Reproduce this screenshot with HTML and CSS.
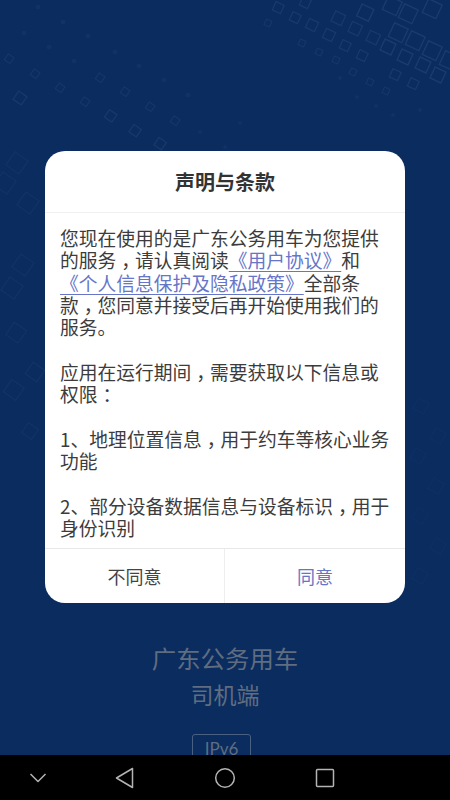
FILE: index.html
```html
<!DOCTYPE html>
<html lang="zh-CN">
<head>
<meta charset="utf-8">
<title>声明与条款</title>
<link rel="stylesheet" href="styles.css">
</head>
<body>
<div class="screen">
  <main class="splash">
    <svg class="pattern" viewBox="0 0 450 755" width="450" height="755" aria-hidden="true">
      <g class="sq big">
        <rect x="385" y="-2" width="15" height="15" transform="rotate(25 392 5)"/>
        <rect x="401" y="6" width="15" height="15" transform="rotate(25 408 13)"/>
        <rect x="425" y="1" width="15" height="15" transform="rotate(25 432 8)"/>
        <rect x="391" y="25" width="15" height="15" transform="rotate(25 398 32)"/>
        <rect x="408" y="33" width="15" height="15" transform="rotate(25 415 40)"/>
        <rect x="425" y="43" width="15" height="15" transform="rotate(25 432 50)"/>
        <rect x="442" y="53" width="15" height="15" transform="rotate(25 449 60)"/>
        <rect x="359" y="6" width="13" height="13" transform="rotate(25 365 12)"/>
        <rect x="382" y="41" width="12" height="12" transform="rotate(25 388 47)"/>
        <rect x="399" y="51" width="12" height="12" transform="rotate(25 405 57)"/>
        <rect x="417" y="59" width="12" height="12" transform="rotate(25 423 65)"/>
        <rect x="432" y="69" width="12" height="12" transform="rotate(25 438 75)"/>
      </g>
      <g class="sq left">
        <rect x="9" y="155" width="16" height="16" transform="rotate(35 17 163)"/>
        <rect x="20" y="195" width="16" height="16" transform="rotate(35 28 203)"/>
        <rect x="-3" y="175" width="16" height="16" transform="rotate(35 5 183)"/>
        <rect x="15" y="257" width="16" height="16" transform="rotate(35 23 265)"/>
        <rect x="4" y="280" width="16" height="16" transform="rotate(35 12 288)"/>
        <rect x="9" y="325" width="15" height="15" transform="rotate(35 16 332)"/>
        <rect x="6" y="382" width="15" height="15" transform="rotate(35 13 390)"/>
        <rect x="28" y="365" width="14" height="14" transform="rotate(35 35 372)"/>
        <rect x="24" y="425" width="12" height="12" transform="rotate(35 30 431)"/>
      </g>
      <g class="sq mid">
        <rect x="333" y="13" width="11" height="11" transform="rotate(25 339 18)"/>
        <rect x="350" y="23" width="11" height="11" transform="rotate(25 355 28)"/>
        <rect x="368" y="32" width="11" height="11" transform="rotate(25 373 37)"/>
        <rect x="307" y="20" width="10" height="10" transform="rotate(25 312 25)"/>
        <rect x="324" y="30" width="10" height="10" transform="rotate(25 329 35)"/>
        <rect x="341" y="41" width="9" height="9" transform="rotate(25 345 45)"/>
        <rect x="358" y="51" width="9" height="9" transform="rotate(25 362 55)"/>
        <rect x="291" y="13" width="9" height="9" transform="rotate(25 295 17)"/>
        <rect x="274" y="3" width="9" height="9" transform="rotate(25 278 7)"/>
        <rect x="301" y="-2" width="9" height="9" transform="rotate(25 305 2)"/>
        <rect x="391" y="70" width="9" height="9" transform="rotate(25 395 74)"/>
        <rect x="409" y="79" width="9" height="9" transform="rotate(25 413 83)"/>
        <rect x="15" y="93" width="10" height="10" transform="rotate(35 20 98)"/>
        <rect x="106" y="111" width="9" height="9" transform="rotate(35 110 116)"/>
        <rect x="131" y="126" width="9" height="9" transform="rotate(35 135 130)"/>
        <rect x="156" y="139" width="9" height="9" transform="rotate(35 160 143)"/>
      </g>
      <g class="sq small">
        <rect x="6" y="55" width="7" height="7" transform="rotate(35 9 58)"/>
        <rect x="32" y="70" width="7" height="7" transform="rotate(35 35 73)"/>
        <rect x="57" y="84" width="7" height="7" transform="rotate(35 60 87)"/>
        <rect x="82" y="98" width="7" height="7" transform="rotate(35 85 101)"/>
        <rect x="97" y="74" width="7" height="7" transform="rotate(35 100 77)"/>
        <rect x="122" y="88" width="7" height="7" transform="rotate(35 125 91)"/>
        <rect x="147" y="103" width="7" height="7" transform="rotate(35 150 106)"/>
        <rect x="172" y="117" width="7" height="7" transform="rotate(35 175 120)"/>
        <rect x="265" y="20" width="6" height="6" transform="rotate(25 268 23)"/>
        <rect x="299" y="40" width="6" height="6" transform="rotate(25 302 43)"/>
        <rect x="316" y="49" width="6" height="6" transform="rotate(25 319 52)"/>
        <rect x="333" y="57" width="6" height="6" transform="rotate(25 336 60)"/>
        <rect x="350" y="69" width="6" height="6" transform="rotate(25 353 72)"/>
        <rect x="367" y="79" width="6" height="6" transform="rotate(25 370 82)"/>
        <rect x="383" y="88" width="6" height="6" transform="rotate(25 386 91)"/>
      </g>
      <g class="sq faint">
        <rect x="415" y="400" width="12" height="12" transform="rotate(30 421 406)"/>
        <rect x="432" y="430" width="12" height="12" transform="rotate(30 438 436)"/>
        <rect x="412" y="450" width="12" height="12" transform="rotate(30 418 456)"/>
        <rect x="430" y="480" width="12" height="12" transform="rotate(30 436 486)"/>
        <rect x="414" y="510" width="12" height="12" transform="rotate(30 420 516)"/>
        <rect x="432" y="540" width="12" height="12" transform="rotate(30 438 546)"/>
        <rect x="414" y="570" width="12" height="12" transform="rotate(30 420 576)"/>
      </g>
      <g class="dots">
        <circle cx="24" cy="33" r="2.500"/><circle cx="49" cy="47" r="2.500"/><circle cx="74" cy="61" r="2.500"/>
        <circle cx="38" cy="7" r="2.500"/><circle cx="63" cy="22" r="2.500"/><circle cx="88" cy="36" r="2.500"/>
        <circle cx="115" cy="52" r="2.500"/><circle cx="139" cy="66" r="2.500"/><circle cx="164" cy="80" r="2.500"/>
        <circle cx="188" cy="95" r="2.500"/><circle cx="240" cy="123" r="2"/><circle cx="200" cy="132" r="2"/>
        <circle cx="225" cy="147" r="2"/><circle cx="340" cy="78" r="2"/><circle cx="357" cy="97" r="2"/>
        <circle cx="376" cy="106" r="2"/><circle cx="393" cy="115" r="2"/><circle cx="420" cy="110" r="2"/>
      </g>
    </svg>
    <div class="brand">
      <h1 class="brand-name">广东公务用车</h1>
      <p class="brand-role">司机端</p>
      <span class="tag">IPv6</span>
    </div>
  </main>

  <nav class="navbar" aria-label="系统导航">
    <svg class="nav-icon" width="20" height="20" viewBox="0 0 20 20"><path d="M2.500 6l7.500 7.500L17.500 6"/></svg>
    <svg class="nav-icon" width="24" height="24" viewBox="0 0 24 24"><path d="M19.500 2.500V21.500L3.500 12z"/></svg>
    <svg class="nav-icon" width="24" height="24" viewBox="0 0 24 24"><circle cx="12" cy="12" r="9.300"/></svg>
    <svg class="nav-icon" width="24" height="24" viewBox="0 0 24 24"><rect x="3.500" y="3.500" width="17" height="17" rx="1"/></svg>
    <span class="nav-spacer"></span>
  </nav>

  <section class="dialog" role="dialog" aria-labelledby="dialog-title">
    <h2 class="dialog-title" id="dialog-title">声明与条款</h2>
    <div class="dialog-body">
      <p>您现在使用的是广东公务用车为您提供的服务<span class="pf">，</span>请认真阅读<a href="#">《用户协议》</a>和<a href="#">《个人信息保护及隐私政策》</a>全部条款<span class="pf">，</span>您同意并接受后再开始使用我们的服务。</p>
      <p>应用在运行期间<span class="pf">，</span>需要获取以下信息或权限<span class="pf">：</span></p>
      <p>1、地理位置信息<span class="pf">，</span>用于约车等核心业务功能</p>
      <p>2、部分设备数据信息与设备标识<span class="pf">，</span>用于身份识别</p>
    </div>
    <div class="dialog-actions">
      <button class="action" type="button">不同意</button>
      <button class="action primary" type="button">同意</button>
    </div>
  </section>
</div>
</body>
</html>
```

FILE: styles.css
```css
* { box-sizing: border-box; }

html, body {
  margin: 0;
  padding: 0;
  background: #000;
}

body {
  font-family: "Noto Sans CJK SC", "Noto Sans", sans-serif;
}

.screen {
  position: relative;
  width: 450px;
  height: 800px;
  overflow: hidden;
  display: flex;
  flex-direction: column;
}

.splash {
  position: relative;
  flex: 1;
  min-height: 0;
  background: #0a2c5f;
  overflow: hidden;
  display: flex;
  flex-direction: column;
  align-items: center;
  padding-top: 640px;
}

.pattern {
  position: absolute;
  inset: 0;
  filter: blur(0.5px);
}

.sq rect { fill: none; }

.sq.big rect { stroke-width: 1.400; stroke: #1b3b6d; }
.sq.left rect { stroke-width: 1.300; stroke: #123365; }
.sq.mid rect { stroke-width: 1.300; stroke: #1a396b; }
.sq.small rect { stroke-width: 1.200; stroke: #17366a; }
.sq.faint rect { stroke-width: 1.200; stroke: #0f3063; }

.dots circle { fill: #123265; }

.brand {
  position: relative;
  display: flex;
  flex-direction: column;
  align-items: center;
}

.brand-name {
  margin: 0;
  font-size: 24.400px;
  line-height: 36px;
  font-weight: 400;
  color: #606d80;
}

.brand-role {
  margin: 0;
  font-size: 23px;
  line-height: 36px;
  color: #606d80;
}

.tag {
  margin: 22px 7px 0 0;
  width: 59px;
  height: 30px;
  border: 1px solid #4a6080;
  border-radius: 3px;
  font-family: "Lato", "Noto Sans", sans-serif;
  font-size: 17px;
  line-height: 28px;
  text-align: center;
  color: #606d80;
}

.navbar {
  flex: none;
  height: 45px;
  background: #000;
  display: grid;
  grid-template-columns: 75px 100px 100px 100px 75px;
  align-items: center;
  justify-items: center;
}

.nav-icon {
  fill: none;
  stroke: #b4b4b4;
  stroke-width: 1.500;
  stroke-linejoin: round;
}

.dialog {
  position: absolute;
  left: 45px;
  top: 151px;
  width: 360px;
  height: 452px;
  background: #fff;
  border-radius: 20px;
  overflow: hidden;
  display: flex;
  flex-direction: column;
}

.dialog-title {
  flex: none;
  margin: 0;
  height: 62px;
  border-bottom: 1px solid #f0f0f0;
  font-size: 20px;
  line-height: 62px;
  font-weight: 700;
  text-align: center;
  color: #333;
}

.dialog-body {
  flex: 1;
  min-height: 0;
  overflow: hidden;
  padding: 14px 15px 0;
  font-size: 18.750px;
  line-height: 22.300px;
  color: #3c3c3c;
}

.dialog-body p {
  margin: 0 0 22.300px;
}

.dialog-body a {
  color: #6675c8;
  text-decoration: underline;
  text-decoration-thickness: 1px;
  text-underline-offset: 3px;
}

.pf {
  margin-left: 0.27em;
  margin-right: -0.27em;
}

.dialog-actions {
  flex: none;
  height: 55px;
  border-top: 1px solid #e8e8e8;
  display: grid;
  grid-template-columns: 180px 180px;
}

.action {
  border: 0;
  background: none;
  padding: 0;
  font: inherit;
  font-size: 18px;
  color: #444;
}

.action:first-child {
  border-right: 1px solid #eee;
}

.action.primary {
  color: #6675c8;
}
```
